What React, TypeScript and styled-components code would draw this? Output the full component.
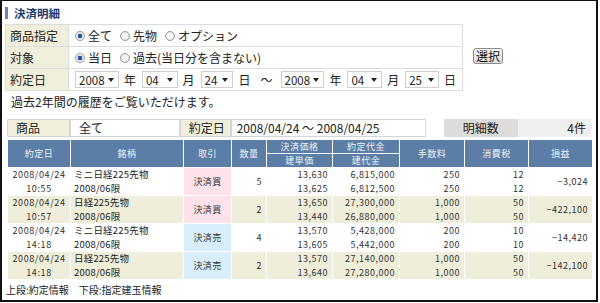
import React from "react";
import styled, { createGlobalStyle } from "styled-components";

const Global = createGlobalStyle`
  html, body { margin: 0; padding: 0; background: #fff; }
  body { font-family: "Noto Sans CJK JP", "Noto Sans", sans-serif; color: #222; }
`;

const Frame = styled.div`
  box-sizing: border-box;
  width: 598px;
  height: 302px;
  border: 2px solid #111;
  border-top-width: 1px;
  padding: 3px 5px 0 3px;
  display: flex;
  flex-direction: column;
  overflow: hidden;
`;

const Title = styled.div`
  display: flex;
  align-items: center;
  gap: 6px;
  height: 16px;
  margin-top: 1px;
  font-size: 11.5px;
  font-weight: bold;
  color: #1d3c6e;
  line-height: 16px;
`;

const TitleBar = styled.span`
  width: 3px;
  height: 12px;
  background: #6a86ad;
`;

const FormRow = styled.div`
  display: flex;
  align-items: center;
  margin-top: 3px;
`;

const FormTable = styled.table`
  border-collapse: collapse;
  table-layout: fixed;
  width: 458px;
  font-size: 12px;
  td {
    border: 1px solid #dcdcdc;
    height: 22px;
    padding: 0;
    box-sizing: border-box;
    white-space: nowrap;
    line-height: 16px;
  }
`;

const Label = styled.td`
  background: #f0efdc;
  padding-left: 4px !important;
  color: #222;
`;

const Value = styled.td`
  background: #fff;
  padding-left: 6px !important;
`;

const Inline = styled.div`
  display: flex;
  align-items: center;
  white-space: nowrap;
`;

const RadioItem = styled.span`
  display: inline-flex;
  align-items: center;
  gap: 3px;
  margin-right: 8px;
  color: #222;
`;

const RadioDot = styled.span<{ $on?: boolean }>`
  box-sizing: border-box;
  width: 10px;
  height: 10px;
  border-radius: 50%;
  border: 1px solid #9a9a9a;
  background: ${(p) =>
    p.$on
      ? "radial-gradient(circle, #2d56a0 0 2.2px, #e9eef5 2.6px)"
      : "radial-gradient(circle, #f4f4f4 0 3px, #e2e2e2 4px)"};
`;

const Select = styled.span<{ $w: number }>`
  box-sizing: border-box;
  display: inline-flex;
  align-items: center;
  justify-content: space-between;
  width: ${(p) => p.$w}px;
  height: 17px;
  border: 1px solid #cfcfcf;
  padding: 0 4px 0 3px;
  background: #fff;
  font-size: 11.5px;
  color: #222;
`;

const Caret = styled.span`
  width: 0;
  height: 0;
  border-left: 3.5px solid transparent;
  border-right: 3.5px solid transparent;
  border-top: 4px solid #222;
`;

const Unit = styled.span<{ $gap?: number }>`
  margin: 0 ${(p) => p.$gap ?? 6}px 0 5px;
  color: #222;
`;

const Button = styled.button`
  margin-left: 10px;
  margin-top: -4px;
  font-family: inherit;
  font-size: 12px;
  line-height: 13px;
  height: 16px;
  padding: 0 2px;
  border: 1px solid #8a8a8a;
  border-radius: 3px;
  background: linear-gradient(#fafafa, #dcdcdc);
  color: #111;
`;

const Note = styled.div`
  font-size: 12px;
  margin: 3px 0 0 6px;
  line-height: 16px;
  color: #222;
`;

const Summary = styled.div`
  display: flex;
  margin-top: 9px;
  margin-left: 2px;
  height: 18px;
  font-size: 12px;
  line-height: 16px;
`;

const SumCell = styled.div<{ $w: number; $bg: string; $align?: string; $border?: boolean }>`
  box-sizing: border-box;
  width: ${(p) => p.$w}px;
  background: ${(p) => p.$bg};
  text-align: ${(p) => p.$align ?? "left"};
  padding: 0 ${(p) => (p.$align === "right" ? 4 : 8)}px;
  border: ${(p) => (p.$border ? "1px solid #d6d6d6" : "1px solid transparent")};
  border-left-width: ${(p) => (p.$border ? 1 : 0)}px;
  color: #222;
  white-space: nowrap;
`;

const Spacer = styled.div`
  width: 18px;
`;

const Grid = styled.table`
  border-collapse: collapse;
  table-layout: fixed;
  width: 585px;
  margin-top: 2px;
  margin-left: 2px;
  font-size: 9px;
  td, th {
    border: 1px solid #fff;
    padding: 0;
    height: 13px;
    line-height: 13px;
    white-space: nowrap;
  }
`;

const Th = styled.th`
  background: #5b7ea7;
  color: #eef2f7;
  font-weight: normal;
  text-align: center;
  font-size: 9px;
  letter-spacing: 0.5px;
`;

const Tr = styled.tr<{ $alt?: boolean }>`
  --row-bg: ${(p) => (p.$alt ? "#efeedb" : "#fff")};
`;

const DateCell = styled.td`
  background: var(--row-bg);
  text-align: center;
  color: #333;
  letter-spacing: 0.6px;
  line-height: 13.5px !important;
`;

const NameCell = styled.td`
  background: var(--row-bg);
  text-align: left;
  padding-left: 3px !important;
  color: #222;
  font-size: 9.5px;
  letter-spacing: 0.2px;
  line-height: 13.5px !important;
`;

const TradeCell = styled.td<{ $buy?: boolean }>`
  text-align: center;
  background: ${(p) => (p.$buy ? "#fde2ea" : "#d9eefb")};
  font-size: 9px;
  letter-spacing: 0.3px;
  color: #333;
`;

const Num = styled.td<{ $upper?: boolean }>`
  background: var(--row-bg);
  text-align: right;
  padding-right: 4px !important;
  color: #333;
  letter-spacing: 0.5px;
  ${(p) => (p.$upper ? "border-bottom-color: transparent !important;" : "")}
`;

type Row = {
  time: string;
  name: string;
  buy: boolean;
  qty: string;
  p: [string, string];
  a: [string, string];
  f: [string, string];
  t: [string, string];
  pl: string;
};

const rows: Row[] = [
  { time: "10:55", name: "ミニ日経225先物", buy: true, qty: "5", p: ["13,630", "13,625"], a: ["6,815,000", "6,812,500"], f: ["250", "250"], t: ["12", "12"], pl: "−3,024" },
  { time: "10:57", name: "日経225先物", buy: true, qty: "2", p: ["13,650", "13,440"], a: ["27,300,000", "26,880,000"], f: ["1,000", "1,000"], t: ["50", "50"], pl: "−422,100" },
  { time: "14:18", name: "ミニ日経225先物", buy: false, qty: "4", p: ["13,570", "13,605"], a: ["5,428,000", "5,442,000"], f: ["200", "200"], t: ["10", "10"], pl: "−14,420" },
  { time: "14:18", name: "日経225先物", buy: false, qty: "2", p: ["13,570", "13,640"], a: ["27,140,000", "27,280,000"], f: ["1,000", "1,000"], t: ["50", "50"], pl: "−142,100" },
];

const Footer = styled.div`
  font-size: 10px;
  margin: 3px 0 0 1px;
  color: #222;
  line-height: 14px;
`;

const widths = [63, 113, 48, 35, 66, 67, 65, 64, 64];

function Radio({ on, label }: { on?: boolean; label: string }) {
  return (
    <RadioItem>
      <RadioDot $on={on} />
      {label}
    </RadioItem>
  );
}

function Sel({ v, w }: { v: string; w: number }) {
  return (
    <Select $w={w}>
      {v}
      <Caret />
    </Select>
  );
}

export default function App() {
  return (
    <>
      <Global />
      <Frame>
        <Title>
          <TitleBar />
          決済明細
        </Title>
        <FormRow>
          <FormTable>
            <colgroup>
              <col style={{ width: 63 }} />
              <col />
            </colgroup>
            <tbody>
              <tr>
                <Label>商品指定</Label>
                <Value>
                  <Inline>
                    <Radio on label="全て" />
                    <Radio label="先物" />
                    <Radio label="オプション" />
                  </Inline>
                </Value>
              </tr>
              <tr>
                <Label>対象</Label>
                <Value>
                  <Inline>
                    <Radio on label="当日" />
                    <Radio label="過去(当日分を含まない)" />
                  </Inline>
                </Value>
              </tr>
              <tr>
                <Label>約定日</Label>
                <Value>
                  <Inline>
                    <Sel v="2008" w={47} />
                    <Unit>年</Unit>
                    <Sel v="04" w={38} />
                    <Unit>月</Unit>
                    <Sel v="24" w={35} />
                    <Unit $gap={5}>日</Unit>
                    <Unit $gap={8}>～</Unit>
                    <Sel v="2008" w={47} />
                    <Unit>年</Unit>
                    <Sel v="04" w={37} />
                    <Unit>月</Unit>
                    <Sel v="25" w={36} />
                    <Unit>日</Unit>
                  </Inline>
                </Value>
              </tr>
            </tbody>
          </FormTable>
          <Button>選択</Button>
        </FormRow>
        <Note>過去2年間の履歴をご覧いただけます。</Note>
        <Summary>
          <SumCell $w={63} $bg="#f0efdc" $border>商品</SumCell>
          <SumCell $w={110} $bg="#fff" $border>全て</SumCell>
          <SumCell $w={51} $bg="#f0efdc" $border>約定日</SumCell>
          <SumCell $w={196} $bg="#fff" $border style={{ paddingLeft: 5 }}>2008/04/24 ～ 2008/04/25</SumCell>
          <Spacer />
          <SumCell $w={74} $bg="#dcdcdc" $align="center">明細数</SumCell>
          <SumCell $w={73} $bg="#efefef" $align="right">4件</SumCell>
        </Summary>
        <Grid>
          <colgroup>
            {widths.map((w, i) => (
              <col key={i} style={{ width: w }} />
            ))}
          </colgroup>
          <thead>
            <tr>
              <Th rowSpan={2}>約定日</Th>
              <Th rowSpan={2}>銘柄</Th>
              <Th rowSpan={2}>取引</Th>
              <Th rowSpan={2}>数量</Th>
              <Th>決済価格</Th>
              <Th>約定代金</Th>
              <Th rowSpan={2}>手数料</Th>
              <Th rowSpan={2}>消費税</Th>
              <Th rowSpan={2}>損益</Th>
            </tr>
            <tr>
              <Th>建単価</Th>
              <Th>建代金</Th>
            </tr>
          </thead>
          <tbody>
            {rows.map((r, i) => (
              <React.Fragment key={i}>
                <Tr $alt={i % 2 === 1}>
                  <DateCell rowSpan={2}>
                    2008/04/24
                    <br />
                    {r.time}
                  </DateCell>
                  <NameCell rowSpan={2}>
                    {r.name}
                    <br />
                    2008/06限
                  </NameCell>
                  <TradeCell rowSpan={2} $buy={r.buy}>
                    {r.buy ? "決済買" : "決済売"}
                  </TradeCell>
                  <Num rowSpan={2}>{r.qty}</Num>
                  <Num $upper>{r.p[0]}</Num>
                  <Num $upper>{r.a[0]}</Num>
                  <Num $upper>{r.f[0]}</Num>
                  <Num $upper>{r.t[0]}</Num>
                  <Num rowSpan={2}>{r.pl}</Num>
                </Tr>
                <Tr $alt={i % 2 === 1}>
                  <Num>{r.p[1]}</Num>
                  <Num>{r.a[1]}</Num>
                  <Num>{r.f[1]}</Num>
                  <Num>{r.t[1]}</Num>
                </Tr>
              </React.Fragment>
            ))}
          </tbody>
        </Grid>
        <Footer>上段:約定情報　下段:指定建玉情報</Footer>
      </Frame>
    </>
  );
}
